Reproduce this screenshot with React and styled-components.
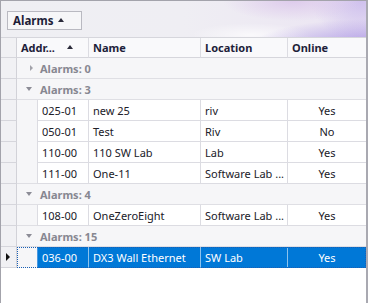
import React from "react";
import styled, { createGlobalStyle } from "styled-components";

const GlobalStyle = createGlobalStyle`
  html, body {
    margin: 0;
    padding: 0;
    background: #ffffff;
  }
  body {
    font-family: "Noto Sans", "Open Sans", sans-serif;
    font-size: 11px;
    color: #202020;
  }
`;

const groups = [
  { count: 0, expanded: false, rows: [] },
  {
    count: 3,
    expanded: true,
    rows: [
      { addr: "025-01", name: "new 25", location: "riv", online: "Yes" },
      { addr: "050-01", name: "Test", location: "Riv", online: "No" },
      { addr: "110-00", name: "110 SW Lab", location: "Lab", online: "Yes" },
      { addr: "111-00", name: "One-11", location: "Software Lab ...", online: "Yes" },
    ],
  },
  {
    count: 4,
    expanded: true,
    rows: [{ addr: "108-00", name: "OneZeroEight", location: "Software Lab ...", online: "Yes" }],
  },
  {
    count: 15,
    expanded: true,
    rows: [{ addr: "036-00", name: "DX3 Wall Ethernet", location: "SW Lab", online: "Yes", selected: true }],
  },
];

const Frame = styled.div`
  width: 368px;
  height: 303px;
  box-sizing: border-box;
  border-top: 1px solid #a3a3ab;
  border-left: 1px solid #a3a3ab;
  border-right: 2px solid #a9a9b1;
  background: #ffffff;
  overflow: hidden;
`;

const GroupPanel = styled.div`
  height: 37px;
  box-sizing: border-box;
  padding: 10px 0 0 6px;
  border-bottom: 1px solid #d6d6dc;
  background:
    radial-gradient(ellipse 70px 20px at 292px 0px, rgba(218, 196, 234, 0.8), rgba(218, 196, 234, 0) 100%),
    radial-gradient(ellipse 120px 26px at 372px 44px, rgba(168, 146, 228, 0.9), rgba(168, 146, 228, 0) 100%),
    radial-gradient(ellipse 50px 40px at 360px 0px, rgba(200, 184, 236, 0.8), rgba(200, 184, 236, 0) 100%),
    radial-gradient(ellipse 60px 12px at 250px 34px, rgba(255, 255, 255, 0.7), rgba(255, 255, 255, 0) 100%),
    linear-gradient(90deg, #efeff3 0%, #efeef3 50%, #ebe4f3 100%);
`;

const GroupButton = styled.div`
  width: 75px;
  height: 19px;
  box-sizing: border-box;
  display: flex;
  align-items: center;
  gap: 5px;
  padding-left: 5px;
  border: 1px solid #b9b9c1;
  background: #f6f6f8;
  font-weight: bold;
  font-size: 11.5px;
  color: #1e1e38;
`;

const SortArrow = styled.span`
  width: 0;
  height: 0;
  border-left: 3px solid transparent;
  border-right: 3px solid transparent;
  border-bottom: 4px solid #2a2a3a;
  margin-top: -1px;
`;

const Row = styled.div`
  display: flex;
  height: ${(p) => p.$height}px;
`;

const Indicator = styled.div`
  width: 16px;
  flex: none;
  box-sizing: border-box;
  display: flex;
  align-items: center;
  justify-content: center;
  border-right: 1px solid #d2d2d8;
  border-bottom: 1px solid #d6d6dc;
  background: #f1f1f4;
`;

const CurrentMark = styled.span`
  width: 0;
  height: 0;
  border-top: 4px solid transparent;
  border-bottom: 4px solid transparent;
  border-left: 4px solid #111111;
  margin-left: -1px;
`;

const HeaderCell = styled.div`
  width: ${(p) => p.$w}px;
  flex: none;
  box-sizing: border-box;
  display: flex;
  align-items: center;
  gap: 12px;
  padding-left: ${(p) => p.$pad}px;
  border-right: ${(p) => (p.$last ? "none" : "1px solid #dcdce2")};
  border-bottom: 1px solid #d6d6dc;
  background: #f9f9fb;
  font-weight: bold;
  color: #1e1e3a;
  white-space: nowrap;
`;

const GroupRow = styled.div`
  flex: 1;
  display: flex;
  align-items: center;
  box-sizing: border-box;
  padding-left: 8px;
  border-bottom: 1px solid #dfdfe4;
  background: #f6f6f8;
  font-weight: bold;
  color: #878791;
`;

const Expander = styled.span`
  width: 15px;
  display: flex;
  align-items: center;
  justify-content: ${(p) => (p.$open ? "flex-start" : "center")};
  &::before {
    content: "";
    width: 0;
    height: 0;
    ${(p) =>
      p.$open
        ? `border-left: 3px solid transparent;
           border-right: 3px solid transparent;
           border-top: 4px solid #8c8c96;
           margin-left: 1px;`
        : `border-top: 3px solid transparent;
           border-bottom: 3px solid transparent;
           border-left: 3px solid #a2a2aa;
           margin-left: -3px;`}
  }
`;

const DataRow = styled.div`
  flex: 1;
  display: flex;
  box-sizing: border-box;
  outline: ${(p) => (p.$selected ? "1px dotted #1a5fb4" : "none")};
  outline-offset: -1px;
`;

const Indent = styled.div`
  width: 20px;
  flex: none;
  box-sizing: border-box;
  background: #f6f6f8;
  border-bottom: ${(p) => (p.$closing ? "1px solid #dfdfe4" : "none")};
`;

const Cell = styled.div`
  width: ${(p) => p.$w}px;
  flex: none;
  box-sizing: border-box;
  display: flex;
  align-items: center;
  justify-content: ${(p) => (p.$center ? "center" : "flex-start")};
  padding-left: ${(p) => (p.$center ? 0 : p.$pad)}px;
  border-left: ${(p) => (p.$first ? `1px solid ${p.$selected ? "#4a98e0" : "#dcdce2"}` : "none")};
  border-right: ${(p) =>
    p.$last ? "none" : `1px solid ${p.$selected ? "rgba(255,255,255,0.55)" : "#dcdce2"}`};
  border-bottom: 1px solid ${(p) => (p.$selected ? "#0078d7" : "#dcdce2")};
  background: ${(p) => (p.$selected ? "#0078d7" : "#ffffff")};
  color: ${(p) => (p.$selected ? "#ffffff" : "#202028")};
  white-space: nowrap;
  overflow: hidden;
`;

const Grid = styled.div`
  display: flex;
  flex-direction: column;
`;

export default function App() {
  return (
    <>
      <GlobalStyle />
      <Frame>
        <GroupPanel>
          <GroupButton>
            Alarms
            <SortArrow />
          </GroupButton>
        </GroupPanel>
        <Grid>
          <Row $height={20}>
            <Indicator />
            <HeaderCell $w={72} $pad={4}>
              Addr...
              <SortArrow />
            </HeaderCell>
            <HeaderCell $w={112} $pad={4}>Name</HeaderCell>
            <HeaderCell $w={87} $pad={4}>Location</HeaderCell>
            <HeaderCell $w={78} $pad={4} $last>Online</HeaderCell>
          </Row>
          {groups.map((g) => (
            <React.Fragment key={g.count}>
              <Row $height={21}>
                <Indicator />
                <GroupRow>
                  <Expander $open={g.expanded} />
                  Alarms: {g.count}
                </GroupRow>
              </Row>
              {g.rows.map((r, i) => (
                <Row $height={21} key={r.addr}>
                  <Indicator>{r.selected && <CurrentMark />}</Indicator>
                  <DataRow $selected={r.selected}>
                    <Indent $closing={i === g.rows.length - 1 && !r.selected} />
                    <Cell $w={52} $pad={4} $first $selected={r.selected}>{r.addr}</Cell>
                    <Cell $w={112} $pad={4} $selected={r.selected}>{r.name}</Cell>
                    <Cell $w={87} $pad={4} $selected={r.selected}>{r.location}</Cell>
                    <Cell $w={78} $center $last $selected={r.selected}>{r.online}</Cell>
                  </DataRow>
                </Row>
              ))}
            </React.Fragment>
          ))}
        </Grid>
      </Frame>
    </>
  );
}
